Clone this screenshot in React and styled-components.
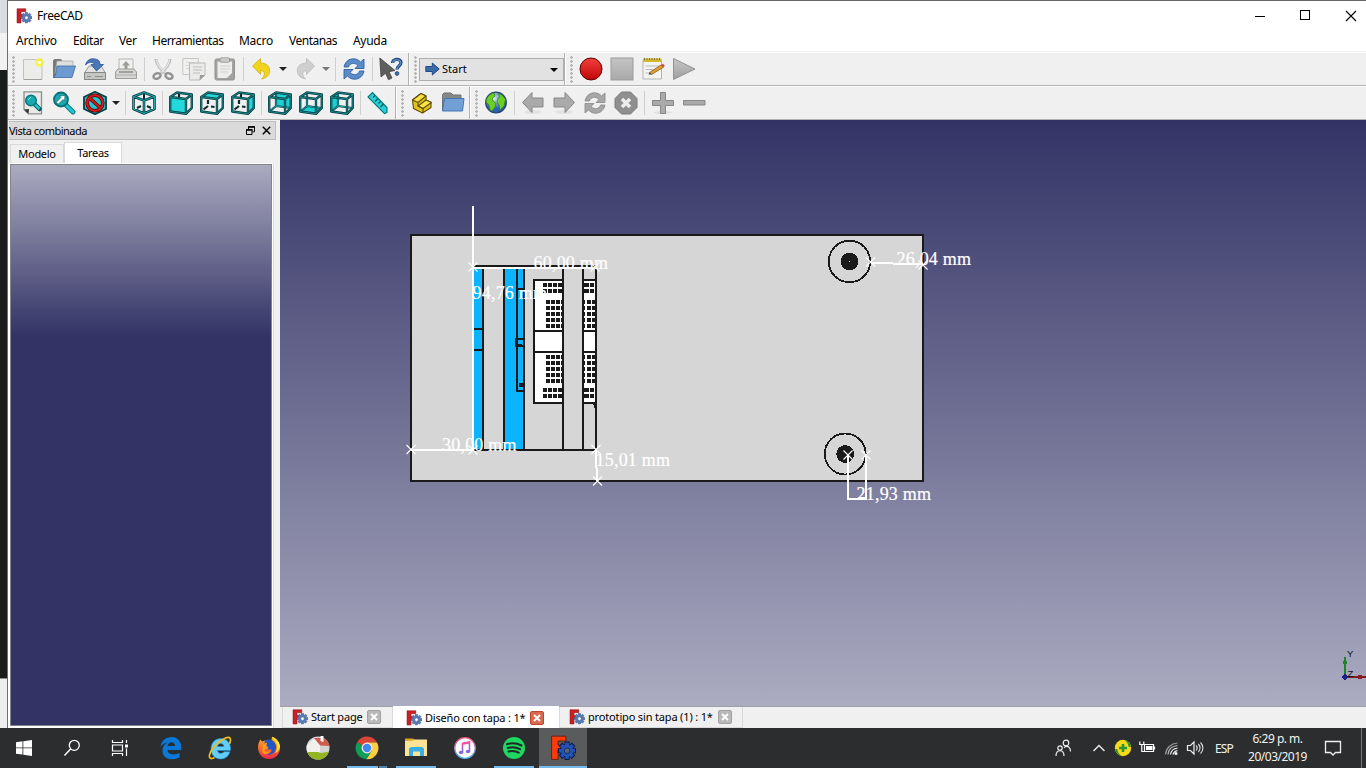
import React from "react";
import styled, { createGlobalStyle } from "styled-components";

const Global = createGlobalStyle`
  * { box-sizing: border-box; }
  body { margin: 0; background: #f0f0f0; overflow: hidden; }
  svg { display: block; flex: none; }
`;
const ui = `"Noto Sans", "Open Sans", sans-serif`;

const Screen = styled.div`
  width: 1366px; height: 768px; display: flex; flex-direction: column;
  font-family: ${ui}; font-size: 11px; color: #000; overflow: hidden;
`;
const Desk = styled.div`display: flex; height: 728px;`;
const Behind = styled.div`
  width: 8px; flex: none; border-right: 1px solid #6c6e70;
  background: linear-gradient(#d9dde2 0 33px, #f1f1f1 33px 70px, #1b1c1c 70px 678px, #8c8c8c 678px 679px, #eee 679px);
`;
const Window = styled.div`
  flex: 1; min-width: 0; display: flex; flex-direction: column;
  background: #f0f0f0; border-top: 1px solid #666;
`;
const TitleBar = styled.div`
  height: 29px; background: #fff; display: flex; align-items: center; padding-left: 8px;
`;
const Title = styled.span`
  font-size: 12px; margin-left: 5px; flex: 1; letter-spacing: -0.4px; line-height: 16px;
`;
const Controls = styled.div`display: flex; gap: 34px; padding-right: 9px;`;
const MenuBar = styled.div`
  height: 22px; background: #fff; border-bottom: 1px solid #f3f3f3; display: flex;
  align-items: center; padding-left: 8px;
`;
const MenuItem = styled.span`
  width: ${p => p.$w}px; font-size: 12px; letter-spacing: ${p => p.$ls}px; line-height: 20px;
  white-space: nowrap;
`;
const Toolbars = styled.div`height: 68px; display: flex; flex-direction: column;`;
const Toolbar = styled.div`
  height: 34px; display: flex; align-items: center; border-top: 1px solid #fcfcfc; border-bottom: 1px solid #b4b4b4;
`;
const Grip = styled.div`
  width: 9px; height: 27px; flex: none;
  background: radial-gradient(circle at 1.5px 1.5px, #b5b5b5 1.1px, transparent 1.5px) 4px 0 / 4px 4px repeat-y;
`;
const ToolButton = styled.div`width: 31px; flex: none; padding: 0 3px 0 4px;`;
const Separator = styled.div`
  width: 6px; height: 24px; flex: none; background: linear-gradient(#cfcfcf, #cfcfcf) 3px 0 / 1px 100% no-repeat;
`;
const BarEnd = styled.div`
  width: ${p => p.$w}px; align-self: stretch; flex: none;
  border-right: 1px solid #fff; box-shadow: inset -1px 0 #b0b0b0;
`;
const Caret = styled.div`
  width: 12px; flex: none; display: flex; justify-content: center;
  &::after { content: ""; border: 4px solid transparent; border-top-color: ${p => p.$c || "#222"}; border-bottom: 0; }
`;
const Combo = styled.div`
  width: 145px; height: 23px; border: 1px solid #adadad; background: #e2e2e2; display: flex;
  align-items: center; padding: 0 3px 0 5px; margin-top: 1px;
`;
const ComboText = styled.span`flex: 1; margin-left: 2px; font-size: 11px; line-height: 14px; padding-bottom: 1px;`;

const Main = styled.div`flex: 1; min-height: 0; display: flex;`;
const Dock = styled.div`width: 272px; flex: none; display: flex; flex-direction: column;`;
const DockTitle = styled.div`
  height: 19px; width: 267px; margin: 1px 0 0 1px; background: #dadada; border: 1px solid #bdbdbd; border-left: 0;
  display: flex; align-items: center; padding-right: 4px; gap: 7px; line-height: 16px;
`;
const DockName = styled.span`flex: 1; letter-spacing: -0.5px;`;
const DockTabs = styled.div`display: flex; align-items: flex-end; height: 23px; padding-left: 2px;`;
const DockTab = styled.div`
  width: ${p => (p.$on ? 58 : 54)}px; height: ${p => (p.$on ? 21 : 19)}px; background: ${p => (p.$on ? "#fff" : "#f0f0f0")};
  border: 1px solid #d9d9d9; border-bottom: 0; display: flex; align-items: center; justify-content: center;
  line-height: 16px; letter-spacing: -0.3px; padding-bottom: ${p => (p.$on ? 1 : 0)}px;
`;
const DockPage = styled.div`flex: 1; background: #fff; border-right: 1px solid #dcdcdc; width: 266px; padding: 1px 1px 2px 2px;`;
const TaskPanel = styled.div`
  width: 262px; height: 100%; border: 1px solid #84848c;
  background: linear-gradient(#aaaac0 0, #333366 171px);
`;
const Center = styled.div`flex: 1; min-width: 0; display: flex; flex-direction: column;`;
const Viewport = styled.div`height: 586px; background: linear-gradient(#333366, #ababc1);`;
const DocTabs = styled.div`height: 22px; display: flex; border-top: 1px solid #a0a0a4; padding-left: 2px;`;
const DocTab = styled.div`
  width: ${p => p.$w}px; height: ${p => (p.$on ? 22 : 21)}px; margin-top: ${p => (p.$on ? -1 : 0)}px;
  background: ${p => (p.$on ? "#fff" : "#f0f0f0")}; border: solid #d9d9d9; border-width: 0 ${p => (p.$on ? 0 : 1)}px;
  box-shadow: ${p => (p.$on ? "none" : "inset 0 -1px #d9d9d9")};
  display: flex; align-items: center; padding-left: ${p => p.$pad}px;
  padding-top: ${p => (p.$on ? 2 : 0)}px; padding-bottom: ${p => (p.$on ? 0 : 1)}px;
`;
const DocName = styled.span`
  width: ${p => p.$w}px; margin-left: 3px; white-space: nowrap; letter-spacing: ${p => p.$ls}px;
  line-height: 14px; padding-bottom: 1px;
`;
const CloseBox = styled.div`
  width: 14px; height: 14px; border-radius: 2px;
  background: ${p => (p.$hot ? "#d9694f" : "#b9b9b9")}; border: 1px solid ${p => (p.$hot ? "#c2452f" : "#a2a2a2")};
  display: flex; align-items: center; justify-content: center;
`;

const Taskbar = styled.div`height: 40px; background: #2b2d2e; display: flex; color: #f2f2f2;`;
const SysButton = styled.div`width: 48px; display: flex; align-items: center; justify-content: center;`;
const Apps = styled.div`display: flex; margin-left: 3px; gap: 1px; flex: 1;`;
const AppButton = styled.div`
  width: 48px; display: flex; flex-direction: column; align-items: center; justify-content: space-between;
  padding-top: ${p => (p.$on ? 7 : 8)}px; background: ${p => (p.$on ? "#595b5c" : "transparent")};
`;
const Underline = styled.div`
  height: 2px; width: ${p => p.$w}px;
  background: ${p => p.$stack ? "linear-gradient(90deg, #76b9ed 31px, #2b2d2e 31px 32px, #5382a8 32px)" : "#76b9ed"};
`;
const Tray = styled.div`display: flex; align-items: center;`;
const TrayItem = styled.div`width: ${p => p.$w}px; display: flex; justify-content: center; white-space: nowrap;`;
const Lang = styled(TrayItem)`font-size: 12px; letter-spacing: -0.8px; margin-left: 6px;`;
const Clock = styled.div`
  width: 84px; font-size: 12px; line-height: 18px; text-align: center; letter-spacing: -0.5px;
  display: flex; flex-direction: column; padding: 0 0 1px 1px;
`;
const ShowDesktop = styled.div`width: 5px; height: 40px; border-left: 1px solid #77797a; margin-left: 14px;`;

const I = ({ children, s = 24, v = "0 0 24 24", h }) => (
  <svg width={s} height={h || s} viewBox={v} fill="none">{children}</svg>
);
const gearTeeth = (cx, cy, r) =>
  [0, 45, 90, 135, 180, 225, 270, 315].map(a => (
    <rect key={a} x={cx - r * 0.22} y={cy - r} width={r * 0.44} height={r * 0.5} transform={`rotate(${a} ${cx} ${cy})`} />
  ));
const Logo = ({ s = 16, big }) => (
  <I s={s} v="0 0 16 16">
    <path d="M1 .7h8.800v3H5v2.600h3.500v3H5V15H1z" fill={big ? "#ff3b0c" : "#cb1f25"} stroke={big ? "#5b1405" : "#8b1216"} strokeWidth=".5" />
    <g fill={big ? "#2353b5" : "#5a7cb4"} stroke={big ? "#081b4d" : "#39578c"} strokeWidth={big ? 0.8 : 0.4}>
      {gearTeeth(10.5, 9.7, 5.3)}<circle cx="10.500" cy="9.700" r="3.900" />
    </g>
    <g fill={big ? "#2353b5" : "#5a7cb4"}><circle cx="10.500" cy="9.700" r="3.700" />{gearTeeth(10.5, 9.7, 4.9)}</g>
    <circle cx="10.500" cy="9.700" r="1.700" fill={big ? "#59686f" : "#fff"} stroke={big ? "#081b4d" : "#39578c"} strokeWidth=".4" />
  </I>
);

const FACES = {
  front: "1,6 17,8 17,23 1,20.5",
  top: "1,6 8,1.5 23,3.5 17,8",
  right: "17,8 23,3.5 23,17 17,23",
  rear: "8,1.5 23,3.5 23,17 8,15",
  bottom: "1,20.5 8,15 23,17 17,23",
  left: "1,6 8,1.5 8,15 1,20.5",
};
const Cube = ({ face }) => {
  const back = ["rear", "bottom", "left"].includes(face);
  const lines = "M1.200 6 8 1.500 22.800 3.500 17 8zM1.200 6V20.500L17 22.800V8M17 22.800l5.800-6V3.500";
  const inner = "M8 1.500V15L1.500 20.500M8 15l14.500 2";
  return (
    <I>
      {back && <polygon points={FACES[face]} fill="#1cd0d3" />}
      {back && <path d={inner} stroke="#0a4c50" strokeWidth="2.200" />}
      {back && <path d={inner} stroke="#29bfc4" strokeWidth=".7" />}
      {!back && <path d="M8 9v4M8 15l-4.500 3.500M11 15.500l3.500.5M10 3v3" stroke="#0c2a2c" strokeWidth="2.200" />}
      {!back && <polygon points={FACES[face]} fill="#24d8db" />}
      <path d={lines} stroke="#073f43" strokeWidth="2.400" strokeLinejoin="round" />
      <path d={lines} stroke="#22a3a8" strokeWidth=".7" strokeLinejoin="round" />
    </I>
  );
};
const IsoCube = () => {
  const d = "M12 1.500 22.500 5.500V18L12 22.500 1.500 18V5.500zM1.500 5.500 12 9.500 22.500 5.500M12 9.500v13";
  return (
    <I>
      <path d="M12 2v6M5 17l4-2M19 17l-4-2" stroke="#0a2e31" strokeWidth="2" />
      <path d={d} stroke="#073f43" strokeWidth="2.600" strokeLinejoin="round" />
      <path d={d} stroke="#27b9be" strokeWidth=".9" />
    </I>
  );
};
const Grad = ({ id, a, b }) => (
  <linearGradient id={id} x1="0" y1="0" x2="0" y2="1"><stop stopColor={a} /><stop offset="1" stopColor={b} /></linearGradient>
);

const NewDoc = () => <I><defs><radialGradient id="sun"><stop offset=".25" stopColor="#fffde0" /><stop offset=".45" stopColor="#fbf02a" /><stop offset="1" stopColor="#fbf34a" stopOpacity=".3" /></radialGradient></defs><path d="M2.500 2.500h18.500V22.500H2.500z" fill="#ececea" stroke="#c1c1bd" /><path d="M3 22.500h18" stroke="#a0a09c" /><circle cx="18.500" cy="5.500" r="5" fill="url(#sun)" /></I>;
const OpenDoc = () => <I><path d="M1 21V3.500L2.500 2H9l1.500 2H21v12z" fill="#777b78" /><path d="M5 4h16v12H3z" fill="#dedfdd" stroke="#a3a5a2" strokeWidth=".7" /><path d="M5 9h18.500L20 20.500H1.500L3.500 18z" fill="#6c9bd2" stroke="#3f6ca6" strokeWidth=".8" /></I>;
const SaveDoc = () => <I><path d="M6 9h12l4.500 7v6.500H1.500V16z" fill="#e2e3e1" stroke="#9b9d99" /><path d="M1.500 15.500h21v7h-21z" fill="#c4c6c3" stroke="#868984" /><path d="M4 19.500h4M12 19.500h8" stroke="#8c8f8a" strokeWidth="1.200" /><path d="M2.500 8C4 2.500 8 .5 14 2.500c3 1 3 4 3 5h3.500L13.500 14 8 7.500h3.500C10 4.500 6 4.500 2.500 8z" fill="#4a78b7" stroke="#2a569a" strokeWidth=".8" /></I>;
const PrintDoc = () => <I><path d="M5 2h14v12H5z" fill="#f1f1f0" stroke="#b6b6b3" /><path d="M12 4 8 8.500h2.500V12h3V8.500H16z" fill="#9a9c98" /><path d="M4 12h16l2.500 3v6.500h-21V15z" fill="#d5d6d4" stroke="#9d9f9b" /><path d="M5 15h14" stroke="#7e807c" strokeWidth="1.200" /><path d="M2 18h20" stroke="#aeb0ac" /></I>;
const Cut = () => <I><path d="M5 2c0 5 5 11 9 14M19 2c0 5-5 11-9 14" stroke="#bfc1be" strokeWidth="3" /><path d="M5.500 3c1 5 4 9 8 12M18.500 3c-1 5-4 9-8 12" stroke="#e9e9e8" strokeWidth="1.200" /><ellipse cx="6" cy="19" rx="3.700" ry="2.600" transform="rotate(-25 6 19)" stroke="#929292" strokeWidth="2.500" /><ellipse cx="18" cy="19" rx="3.700" ry="2.600" transform="rotate(25 18 19)" stroke="#929292" strokeWidth="2.500" /></I>;
const Copy = () => <I><path d="M.8 1.500h15.500v16H.8z" fill="#f1f1f0" stroke="#c5c5c3" /><path d="M4 5.500h9M4 8.500h5M4 11.500h5" stroke="#d2d2d0" strokeWidth="1.200" /><path d="M7.500 6h15.500v12l-5 5H7.500z" fill="#ebebea" stroke="#b9b9b7" /><path d="M11 10h9M11 13h9M11 16h7" stroke="#cdcdcb" strokeWidth="1.500" /><path d="m17.500 23 .5-5h5z" fill="#9b9b99" /></I>;
const Paste = () => <I><rect x="2" y="2" width="19.500" height="21" rx="1.500" fill="#a2a3a0" stroke="#929390" /><path d="M4.500 4.500h14.500V21h-14.500z" fill="#ededec" /><rect x="7" y=".8" width="9.500" height="4.500" rx="1" fill="#cacac8" stroke="#8d8e8b" strokeWidth=".7" /><path d="M7 9h10M7 12h10M7 15h8" stroke="#d2d2d0" strokeWidth="1.200" /><path d="m14 21 5-5v5z" fill="#a1a19f" /></I>;
const Undo = ({ grey }) => <I><g transform={grey ? "translate(24 0) scale(-1 1)" : ""}><path d="M2.500 9 10.500 1.500V6C17 6 20.500 10 19.500 15.500 18.800 19 16 21 11.500 22c4-3.500 4-8-1-8.500v4z" fill={grey ? "#cfcfcf" : "#f0d31d"} stroke={grey ? "#b9b9b9" : "#d2ae10"} strokeWidth=".8" /></g></I>;
const Refresh = ({ c = "#5b8ccc", d = "#315f9f" }) => <I><g fill={c} stroke={d} strokeWidth=".9" strokeLinejoin="round"><path d="M2 10C3 4 9 0 15 2.500c1.500.6 2.500 1.500 3.500 2.500L22 2v9.500h-9L16 8.500C12.500 5 7.500 6 6.500 10z" /><path d="M22 14c-1 6-7 10-13 7.500-1.500-.6-2.500-1.500-3.500-2.500L2 22v-9.500h9L8 15.500c3.500 3.500 8.500 2.500 9.500-1.500z" /></g></I>;
const WhatsThis = () => <I><path d="M.8 1 16 13.500l-6 1.200L13 21l-3.500 1.700-3-6.500L2 20z" fill="#5d5f5d" stroke="#424442" strokeWidth=".8" /><path d="M13.500 6c0-4.500 8.500-5 8.500-.5 0 3.500-4 3.500-4 7" stroke="#1f457b" strokeWidth="3.200" /><path d="M13.700 6c0-4 8.100-4.500 8.100-.5 0 3.500-3.800 3.500-3.800 6.700" stroke="#5888c4" strokeWidth="1.300" /><circle cx="18" cy="16.500" r="2" fill="#3969a9" stroke="#1f457b" strokeWidth=".6" /></I>;
const StartArrow = () => <I s={15} v="0 0 15 15"><path d="M.8 4.500h6.500V1L14.200 7 7.300 13V9.500H.8z" fill="#3a69a8" stroke="#204a87" /></I>;
const Record = () => <I><defs><Grad id="rec" a="#f3403c" b="#c00508" /></defs><circle cx="12" cy="12" r="11" fill="url(#rec)" stroke="#5e0000" strokeWidth="1" /></I>;
const StopSq = () => <I><defs><Grad id="sq" a="#c4c4c4" b="#a9a9a9" /></defs><rect x="1" y="1" width="22" height="22" fill="url(#sq)" stroke="#9b9b9b" /></I>;
const Play = () => <I><defs><Grad id="pl" a="#c6c6c6" b="#9f9f9f" /></defs><path d="M1.500 1.500 23 12 1.500 22.500z" fill="url(#pl)" stroke="#949494" /></I>;
const Macro = () => <I><path d="M2 3.500h18.500V22H2z" fill="#f4f4f3" stroke="#b3b3b0" /><path d="M2 1.500h18.500V5H2z" fill="#d3b92e" /><path d="M3 2h17" stroke="#87742a" strokeDasharray="1 1.500" strokeWidth="2" /><path d="M4.500 9h14M4.500 12.500h8M4.500 16h5" stroke="#b9b9b6" strokeWidth="1.200" /><path d="M8.500 15.500 20 8l2.500 2.200L10.500 17.500z" fill="#e39c36" stroke="#8c5a17" strokeWidth=".8" /><path d="m20 8 2-1.200 1.800 2-1.300 1.400z" fill="#ce4b43" /><path d="m7.500 17.500 1.500-2 1.500 2z" fill="#333" /></I>;
const FitAll = () => <I><path d="M3 .8h17.500v22H7.500L3 18.500z" fill="#e9e9e8" stroke="#8c8e8b" strokeWidth="1.300" /><path d="m3 18.500 5-.5-.5 4.800z" fill="#333" /><path d="m13.500 13 5 5" stroke="#075458" strokeWidth="4.500" strokeLinecap="round" /><path d="m13.500 13 5 5" stroke="#1bc7cb" strokeWidth="2.500" /><circle cx="10" cy="9.500" r="5.300" fill="#19a9b0" stroke="#08777e" strokeWidth="1.500" /><path d="m7 9 3-3" stroke="#79e4e6" /></I>;
const FitSel = () => <I><path d="m13 13 8 8" stroke="#0b7478" strokeWidth="4.800" strokeLinecap="round" /><path d="m13 13 8 8" stroke="#1bcbd0" strokeWidth="3" strokeLinecap="round" /><circle cx="9" cy="8.500" r="7" fill="#19a9b0" stroke="#077077" strokeWidth="1.800" /><path d="m5 12.500 1.500.5 4.500-4.500 1.500 1.500.5-5.500L7.500 5 9 6.500 4.500 11z" fill="#fff" stroke="#155" strokeWidth=".6" /></I>;
const DrawStyle = () => <I><path d="M12 .8 23 6V18L12 23.200 1 18V6z" fill="#23c5ca" stroke="#073f43" strokeWidth="1.800" /><circle cx="12" cy="12" r="7.800" stroke="#4d0000" strokeWidth="3.600" /><path d="m6.500 7 11 10" stroke="#4d0000" strokeWidth="3.600" /><circle cx="12" cy="12" r="7.800" stroke="#d2171b" strokeWidth="2.300" /><path d="m6.500 7 11 10" stroke="#d2171b" strokeWidth="2.300" /></I>;
const Ruler = () => <I><path d="M1 6 5.500 1.500 20 16.500v5l-2.500 1.200z" fill="#26cfd3" stroke="#07757a" strokeWidth="1.100" /><path d="m8 4.500-2 2M11 7.500l-3 3M13.500 10.500l-2 2M16.500 13l-3 3" stroke="#07555a" strokeWidth="1.100" /></I>;
const Part = () => <I><g stroke="#5d4c05" strokeWidth="1.100" strokeLinejoin="round"><path d="M2.500 9 11 2.500l5 2.500v4l5 2.500v5L12.500 22l-9-4.500z" fill="#e3c41b" /><path d="M2.500 9 11 2.500 16 5l-8 6.500z" fill="#f7e24a" /><path d="m8 15 8-6 5.500 2.500-8.500 6z" fill="#f7e24a" /><path d="M8 11.500V15l5 2.500V22" /></g></I>;
const Folder = () => <I><path d="M1.500 19V3.500L3 2h7l2 2h8v5z" fill="#858885" stroke="#70736f" /><path d="M3.500 7.500h19.500L21.500 20H1.500z" fill="#719fd6" stroke="#4676b2" /></I>;
const Globe = () => <I><defs><radialGradient id="gl" cx=".4" cy=".3"><stop stopColor="#dbe9fa" /><stop offset="1" stopColor="#2a62b2" /></radialGradient></defs><circle cx="12" cy="11.500" r="10.300" fill="url(#gl)" stroke="#2b4778" strokeWidth="1.300" /><path d="M3 7c2-3 4-4.500 7-5l1 3-3 3 2 3 2 1-1 4-3 4-2-1-1-5-3-3zM14 2.500l4 1.500 3.500 4.500L20 15l-4 4-1-5-2-3 1-4 2-1z" fill="#6bd024" stroke="#357f18" strokeWidth=".7" /></I>;
const Back = ({ flip }) => <I><ellipse cx="12" cy="21" rx="9" ry="2" fill="#e2e2e2" /><path d={flip ? "M22.500 11.500 13 1.500V7H2v9h11v5.500z" : "M1.500 11.500 11 1.500V7h11v9H11v5.500z"} fill="#a9aaa9" stroke="#858685" /></I>;
const StopOct = () => <I><path d="M7.500 1h9L23 7.500v9L16.500 23h-9L1 16.500v-9z" fill="#8e8f8e" stroke="#7b7c7b" /><path d="m8 8 8 8m0-8-8 8" stroke="#eee" strokeWidth="3.400" /></I>;
const Plus = () => <I><ellipse cx="12" cy="21.500" rx="9" ry="1.500" fill="#dedede" /><path d="M9.500 1.500h5v8H22.500v5h-8v8h-5v-8h-8v-5h8z" fill="#a9aaa9" stroke="#858685" /></I>;
const Minus = () => <I><path d="M1.500 9.500h21.500v4.500H1.500z" fill="#a9aaa9" stroke="#858685" /></I>;

const range = (a, n, step) => Array.from({ length: n }, (_, i) => a + i * step);
const Dots = ({ xs, ys }) => xs.flatMap(([x, w]) => ys.map(y => <rect key={`${x}-${y}`} x={x} y={y} width={w} height="4" fill="#1a1a1a" />));
const wide = [[543, 4], [548, 4], [553, 4], [558, 4], [584, 5], [590, 4]];
const narrow = [[546, 4], [551, 4], [556, 4], [561, 2], [584, 1], [587, 4], [592, 4]];
const Cross = ({ x, y }) => <path d={`M${x - 4.5} ${y - 4.5}l9 9m0-9-9 9`} stroke="#fff" strokeWidth="1.100" />;

const Drawing = () => (
  <svg width="1086" height="586" viewBox="280 120 1086 586" fill="none" shapeRendering="crispEdges">
    <rect x="411" y="235" width="512" height="246" fill="#d6d6d6" stroke="#1a1a1a" strokeWidth="2" />
    <rect x="474" y="268" width="9" height="182" fill="#0cb4ff" />
    <rect x="504" y="268" width="20" height="182" fill="#0cb4ff" />
    <rect x="534" y="280" width="29" height="123" fill="#fff" />
    <rect x="583" y="280" width="13" height="123" fill="#fff" />
    <Dots xs={wide} ys={[283, 289, 388, 394]} />
    <Dots xs={narrow} ys={[...range(300, 5, 6), ...range(355, 5, 6)]} />
    <g stroke="#1a1a1a" strokeWidth="2">
      <path d="M473 266H597M473 450H597M483 268V450M504 268V450M524 268V450M563 268V450M583 268V450M596 266V450" />
      <path d="M474 329h9M474 350h9M517 268V391h7M517 289h7M534 403V280h29M583 280h13M534 331h29M583 331h13M534 352h29M583 352h13M533 403h30M583 403h13" />
      <path d="M524 339h-8v7h8" />
    </g>
    <path d="M519 383h5v4h-5zM518 344h4v2h-4zM593 404h3v4h-1.500z" fill="#1a1a1a" />
    <g stroke="#1a1a1a" strokeWidth="1.800">
      <circle cx="849.500" cy="261.500" r="20.700" /><circle cx="849.500" cy="261.500" r="8" fill="#1a1a1a" />
      <circle cx="845.200" cy="454" r="20.500" /><circle cx="845.200" cy="454" r="8" fill="#1a1a1a" />
    </g>
    <rect x="849" y="261" width="1" height="1" fill="#ddd" />
    <g stroke="#fff" strokeWidth="2">
      <path d="M473 206V450M473 268H590M411 450H473M596 450V468M597 468V481" />
      <path d="M848 455V499H866V455" />
    </g>
    <path d="M858 498h8M871 263h22" stroke="#fff" strokeWidth="2" />
    <path d="M893 264h30" stroke="#fff" strokeWidth="2" />
    <g shapeRendering="auto">
      <Cross x={473} y={267} /><Cross x={595} y={267} /><Cross x={411} y={449.500} /><Cross x={473} y={450} />
      <Cross x={596} y={449.500} /><Cross x={597.500} y={481} /><Cross x={870.500} y={262} /><Cross x={923} y={265} />
      <Cross x={848} y={455} /><Cross x={866} y={455} />
    </g>
    <g fill="#fff" fontFamily="'Liberation Serif', serif" fontSize="18" stroke="#fff" strokeWidth=".2">
      <text x="533.500" y="269" textLength="74.500">60,00 mm</text>
      <text x="472.500" y="299" textLength="74.500">94,76 mm</text>
      <text x="442" y="450.500" textLength="74.500">30,00 mm</text>
      <text x="595.500" y="465.500" textLength="74.500">15,01 mm</text>
      <text x="896.500" y="264.500" textLength="74.500">26,04 mm</text>
      <text x="856.500" y="499.500" textLength="74.500">21,93 mm</text>
    </g>
    <path d="M1345 657V675" stroke="#1f8426" strokeWidth="2" /><path d="M1343 661h4v3h-4z" fill="#1f8426" />
    <path d="M1346 677h20" stroke="#7d1d20" strokeWidth="2" /><path d="M1358 675h4v4h-4z" fill="#8d1d20" />
    <circle cx="1345" cy="677" r="2.800" fill="#20208c" />
    <g fill="#111" fontFamily="'Liberation Sans', sans-serif" fontSize="9.500">
      <text x="1347" y="657">Y</text><text x="1347.500" y="677">Z</text>
    </g>
  </svg>
);

const CloseX = ({ hot }) => (
  <CloseBox $hot={hot}><I s={8} v="0 0 8 8"><path d="m1 1 6 6m0-6L1 7" stroke="#fff" strokeWidth="1.900" /></I></CloseBox>
);

const WinLogo = () => <I s={16} v="0 0 16 16"><path d="M0 2.200 6.500 1.300v6.200H0zM7.300 1.200 16 0v7.500H7.300zM0 8.300h6.500v6.300L0 13.700zM7.300 8.300H16V16l-8.700-1.200z" fill="#fff" /></I>;
const Search = () => <I s={18} v="0 0 18 18"><circle cx="11.300" cy="6.300" r="5" stroke="#fff" strokeWidth="1.300" /><path d="M7.800 9.800 1.500 16.500" stroke="#fff" strokeWidth="1.500" /></I>;
const TaskView = () => <I s={18} v="0 0 18 18"><path d="M1.500 1v2.500h10V1M1.500 17v-2.500h10V17M1.500 6h10v6h-10zM15.500 1v3M15.500 9.500V17" stroke="#fff" strokeWidth="1.200" /><path d="M14 5.500h3v3h-3z" fill="#fff" /></I>;
const Edge = () => <I><path d="M1.500 11C2 4.500 7 1 12.500 1 19 1 22.300 6 22.300 11v3H8.500c.3 5 7.500 5.500 12 2.800v4.700C14 25 3.500 24 3.500 14.500c0-4 2-6.500 5-8C5.500 6.800 3 8.500 1.500 11zM8.500 10h7.500c0-5-6.500-5-7.500 0z" fill="#0a78d7" fillRule="evenodd" /></I>;
const IE = () => <I><path d="M3 13C3 6.500 7.500 2.500 12.800 2.500 19 2.500 22.500 7.500 22.500 12v2.500H9.500c.5 3.500 4.500 3.500 6.500 1.200h6C20.500 21 16 23 12.500 23 7 23 3 19 3 13zM9.500 10.500h6.500c-.5-4-6-4-6.500 0z" fill="#63cff8" stroke="#1a91cf" strokeWidth=".6" fillRule="evenodd" /><path d="M21.500 8c2-5 1-8-4-6C11 4.500 3 13 1.500 19c-.7 3.500 1.500 4.500 5 2.500" stroke="#f3bd16" strokeWidth="1.700" /></I>;
const Firefox = () => <I><defs><Grad id="ff" a="#ffb516" b="#ef2849" /></defs><path d="M1 11c.3-3 1-6 2.500-7.500L5 5.500l3-1 6 2L15 .8c5 2 8 6 8 11.500C23 18.500 18 23 12 23S1 18.500 1 11z" fill="url(#ff)" /><path d="M8 4.500c6-3 12 2 11 8-1 5-6 7.500-10 5.500 5 0 6-3 5.500-4.500L8 13l-1-4z" fill="#2156c6" /><path d="m6 8 4-1.500L9.500 10l2 1.500c-1 2-3.500 1.500-4 2.500 0 2 3.500 2.500 6 .5-1 4-6 4.500-8.500 2z" fill="#ff981b" /><path d="M15 .8c1 3 5 5 5 10 0 3-1 5-2 6.500 4-2 5-5 5-7.500C22 5 19 2 15 .8z" fill="#ffe52f" /></I>;
const House = () => <I><clipPath id="hc"><circle cx="12" cy="12" r="11.500" /></clipPath><g clipPath="url(#hc)"><path d="M0 0h24v24H0z" fill="#d3d4d3" /><path d="M7 2h17v8l-10-.5z" fill="#cf5a4c" /><path d="m0 10 8-8 6 7.500V17H0z" fill="#f1f0ec" /><path d="M0 16h12l3 1 9-1.500V24H0z" fill="#93b524" /></g><path d="M14.500 0h3v6l-3-1z" fill="#fff" /></I>;
const Chrome = () => <I><path d="M12 12 2.200 6.200A11.300 11.300 0 0 1 22 6.500H12z" fill="#dc4437" /><path d="M12 12 2.200 6.200A11.300 11.300 0 0 0 11.500 23.300L17 15z" fill="#109d58" /><path d="M12 6.500h10A11.300 11.300 0 0 1 11.500 23.300L17 14.500z" fill="#ffcd40" /><circle cx="12" cy="12" r="5.400" fill="#f1f1f1" /><circle cx="12" cy="12" r="4.200" fill="#4285f4" /></I>;
const Explorer = () => <I><path d="M1 4.500V2.500h8l2 1.500v1z" fill="#e2a41b" /><path d="M1 4.500h8L10.500 3.500H23V20H1z" fill="#ffe394" /><path d="M5 20v-7.500L7 11h11l2 1.500V20h-4v-4.500H9V20z" fill="#38aee8" /></I>;
const ITunes = () => <I><defs><Grad id="it" a="#fa4e78" b="#4cb4ef" /><Grad id="itn" a="#ec55a0" b="#746be4" /></defs><circle cx="12" cy="12" r="10.300" fill="#fff" stroke="url(#it)" strokeWidth="1.300" /><path d="M9.500 16.500V7.500l7-1.500v9" stroke="url(#itn)" strokeWidth="1.600" /><path d="M9 9V7l8-1.800v2.200z" fill="#ec55a0" /><ellipse cx="8" cy="16.500" rx="2.200" ry="1.700" fill="#8368dc" /><ellipse cx="15" cy="15.500" rx="2.200" ry="1.700" fill="#8368dc" /></I>;
const Spotify = () => <I><circle cx="12" cy="12" r="11" fill="#1ed760" /><path d="M5 8.200c5-1.400 10-1 14.500 1.300M5.700 12c4-1.200 8.500-.8 12.300 1.200M6.500 15.500c3.500-1 7-.7 10.300 1.100" stroke="#1f2a24" strokeWidth="2" strokeLinecap="round" /></I>;

const People = () => <I s={18} v="0 0 18 18"><g stroke="#eee" strokeWidth="1.200"><circle cx="6" cy="9" r="2.200" /><path d="M2 17c0-7 8-7 8 0" /><circle cx="12" cy="4" r="2.800" /><path d="M10 8.500c4-2.500 6.500 0 6.500 4" /></g></I>;
const Chevron = () => <I s={14} v="0 0 14 14"><path d="m1.500 10 5.500-5.500L12.500 10" stroke="#eee" strokeWidth="1.400" /></I>;
const Shield = () => <I s={18} v="0 0 18 18"><circle cx="9" cy="9" r="8.200" fill="#f7d91b" /><path d="M1 10c1 4 3.500 6.500 7 7.200-3-2-4.500-4-4.500-7zM17 8c-1-4-4-6.500-7-7.200 3 2 4.500 4 4.500 7z" fill="#228b30" /><path d="M9 5v8M5 9h8" stroke="#279535" strokeWidth="2.600" /></I>;
const Battery = () => <I s={18} v="0 0 18 18"><path d="M6.500 5.500h9v7h-9zM16.500 7.500v3" stroke="#fff" strokeWidth="1.200" /><path d="M8 7h6.500v4H8z" fill="#fff" /><path d="M1.800 2.500v3h4v-3M3.800 5.500v7h3" stroke="#fff" strokeWidth="1.200" /></I>;
const Wifi = () => <I s={16} v="0 0 16 16"><g strokeWidth="1.200"><path d="M2.500 14.500C3 8 8 3.500 14.500 3" stroke="#999" /><path d="M5 14.500c.5-5 4-8.500 9.500-9" stroke="#bbb" /><path d="M7.500 14.500c.5-3.500 3-6 7-6.500M10 14.500c.5-2 2-3.500 4.500-4" stroke="#eee" /></g><circle cx="13" cy="13.500" r="1.500" fill="#fff" /></I>;
const Volume = () => <I s={18} v="0 0 18 18"><path d="M1.500 6.500h3L8 3v12l-3.500-3.500h-3z" stroke="#eee" strokeWidth="1.200" /><path d="M10 6.500c1.500 1.500 1.500 3.500 0 5M12.300 5c2.300 2.300 2.300 5.700 0 8M14.500 3.500c3.200 3.200 3.200 7.800 0 11" stroke="#ddd" strokeWidth="1.100" /></I>;
const Notify = () => <I s={18} v="0 0 18 18"><path d="M1.500 2.500h15v11h-5L9 16l-2.500-2.500h-5z" stroke="#eee" strokeWidth="1.300" /></I>;

const Tools = ({ items }) => items.map((item, i) => {
  if (item === "|") return <Separator key={i} />;
  if (item === "v") return <Caret key={i} />;
  if (item === "V") return <Caret key={i} $c="#777" />;
  return <ToolButton key={i}>{item}</ToolButton>;
});

const apps = [
  { icon: <Edge /> }, { icon: <IE /> }, { icon: <Firefox /> }, { icon: <House /> },
  { icon: <Chrome />, line: 40, stack: true }, { icon: <Explorer />, line: 40 }, { icon: <ITunes /> },
  { icon: <Spotify />, line: 40 }, { icon: <Logo s={26} big />, line: 48, on: true },
];
const menus = [
  ["Archivo", 57, -0.15], ["Editar", 46, -0.4], ["Ver", 33, -0.4], ["Herramientas", 87, -0.5],
  ["Macro", 50, -0.3], ["Ventanas", 64, -0.5], ["Ayuda", 50, -0.3],
];

export default function App() {
  return (
    <Screen>
      <Global />
      <Desk>
        <Behind />
        <Window>
          <TitleBar>
            <Logo />
            <Title>FreeCAD</Title>
            <Controls>
              <I s={12} v="0 0 12 12"><path d="M1 6.500h10" stroke="#000" /></I>
              <I s={11} v="0 0 11 11"><path d="M.5.5h9v9H.5z" stroke="#000" shapeRendering="crispEdges" /></I>
              <I s={12} v="0 0 12 12"><path d="m1 1 10 10m0-10L1 11" stroke="#000" strokeWidth="1.100" /></I>
            </Controls>
          </TitleBar>
          <MenuBar>{menus.map(([t, w, ls]) => <MenuItem key={t} $w={w} $ls={ls}>{t}</MenuItem>)}</MenuBar>
          <Toolbars>
            <Toolbar>
              <Grip />
              <Tools items={[<NewDoc />, <OpenDoc />, <SaveDoc />, <PrintDoc />, "|", <Cut />, <Copy />, <Paste />, "|", <Undo />, "v", <Undo grey />, "V", "|", <Refresh />, "|", <WhatsThis />]} />
              <BarEnd $w={4} /><Grip />
              <Combo><StartArrow /><ComboText>Start</ComboText><Caret $c="#000" /></Combo>
              <BarEnd $w={2} /><Grip />
              <Tools items={[<Record />, <StopSq />, <Macro />, <Play />]} />
            </Toolbar>
            <Toolbar>
              <Grip />
              <Tools items={[<FitAll />, <FitSel />, <DrawStyle />, "v", "|", <IsoCube />, "|", <Cube face="front" />, <Cube face="top" />, <Cube face="right" />, "|", <Cube face="rear" />, <Cube face="bottom" />, <Cube face="left" />, "|", <Ruler />]} />
              <BarEnd $w={3} /><Grip />
              <Tools items={[<Part />, <Folder />]} />
              <BarEnd $w={3} /><Grip />
              <Tools items={[<Globe />, "|", <Back />, <Back flip />, <Refresh c="#a5a6a5" d="#8c8d8c" />, <StopOct />, "|", <Plus />, <Minus />]} />
            </Toolbar>
          </Toolbars>
          <Main>
            <Dock>
              <DockTitle>
                <DockName>Vista combinada</DockName>
                <I s={9} v="0 0 9 9"><path d="M2.500 3V.8h6v5H6.500M.5 3.500h5.500v5H.5z" stroke="#000" /><path d="M2 1h7M0 4h6.500" stroke="#000" strokeWidth="1.500" /></I>
                <I s={9} v="0 0 9 9"><path d="m.8.800 7.400 7.400m0-7.400L.8 8.200" stroke="#000" strokeWidth="1.500" /></I>
              </DockTitle>
              <DockTabs><DockTab>Modelo</DockTab><DockTab $on>Tareas</DockTab></DockTabs>
              <DockPage><TaskPanel /></DockPage>
            </Dock>
            <Center>
              <Viewport><Drawing /></Viewport>
              <DocTabs>
                <DocTab $w={111} $pad={9}><Logo /><DocName $w={56} $ls={-0.2}>Start page</DocName><CloseX /></DocTab>
                <DocTab $w={166} $on $pad={13}><Logo /><DocName $w={105} $ls={-0.2}>Diseño con tapa : 1*</DocName><CloseX hot /></DocTab>
                <DocTab $w={184} $pad={9}><Logo /><DocName $w={130} $ls={-0.16}>prototipo sin tapa (1) : 1*</DocName><CloseX /></DocTab>
              </DocTabs>
            </Center>
          </Main>
        </Window>
      </Desk>
      <Taskbar>
        <SysButton><WinLogo /></SysButton>
        <SysButton><Search /></SysButton>
        <SysButton><TaskView /></SysButton>
        <Apps>
          {apps.map((a, i) => (
            <AppButton key={i} $on={a.on}>{a.icon}{a.line && <Underline $w={a.line} $stack={a.stack} />}</AppButton>
          ))}
        </Apps>
        <Tray>
          <TrayItem $w={48}><People /></TrayItem>
          <TrayItem $w={24}><Chevron /></TrayItem>
          <TrayItem $w={24}><Shield /></TrayItem>
          <TrayItem $w={24}><Battery /></TrayItem>
          <TrayItem $w={24}><Wifi /></TrayItem>
          <TrayItem $w={24}><Volume /></TrayItem>
          <Lang $w={22}>ESP</Lang>
          <Clock><span>6:29 p. m.</span><span>20/03/2019</span></Clock>
          <TrayItem $w={28}><Notify /></TrayItem>
          <ShowDesktop />
        </Tray>
      </Taskbar>
    </Screen>
  );
}
